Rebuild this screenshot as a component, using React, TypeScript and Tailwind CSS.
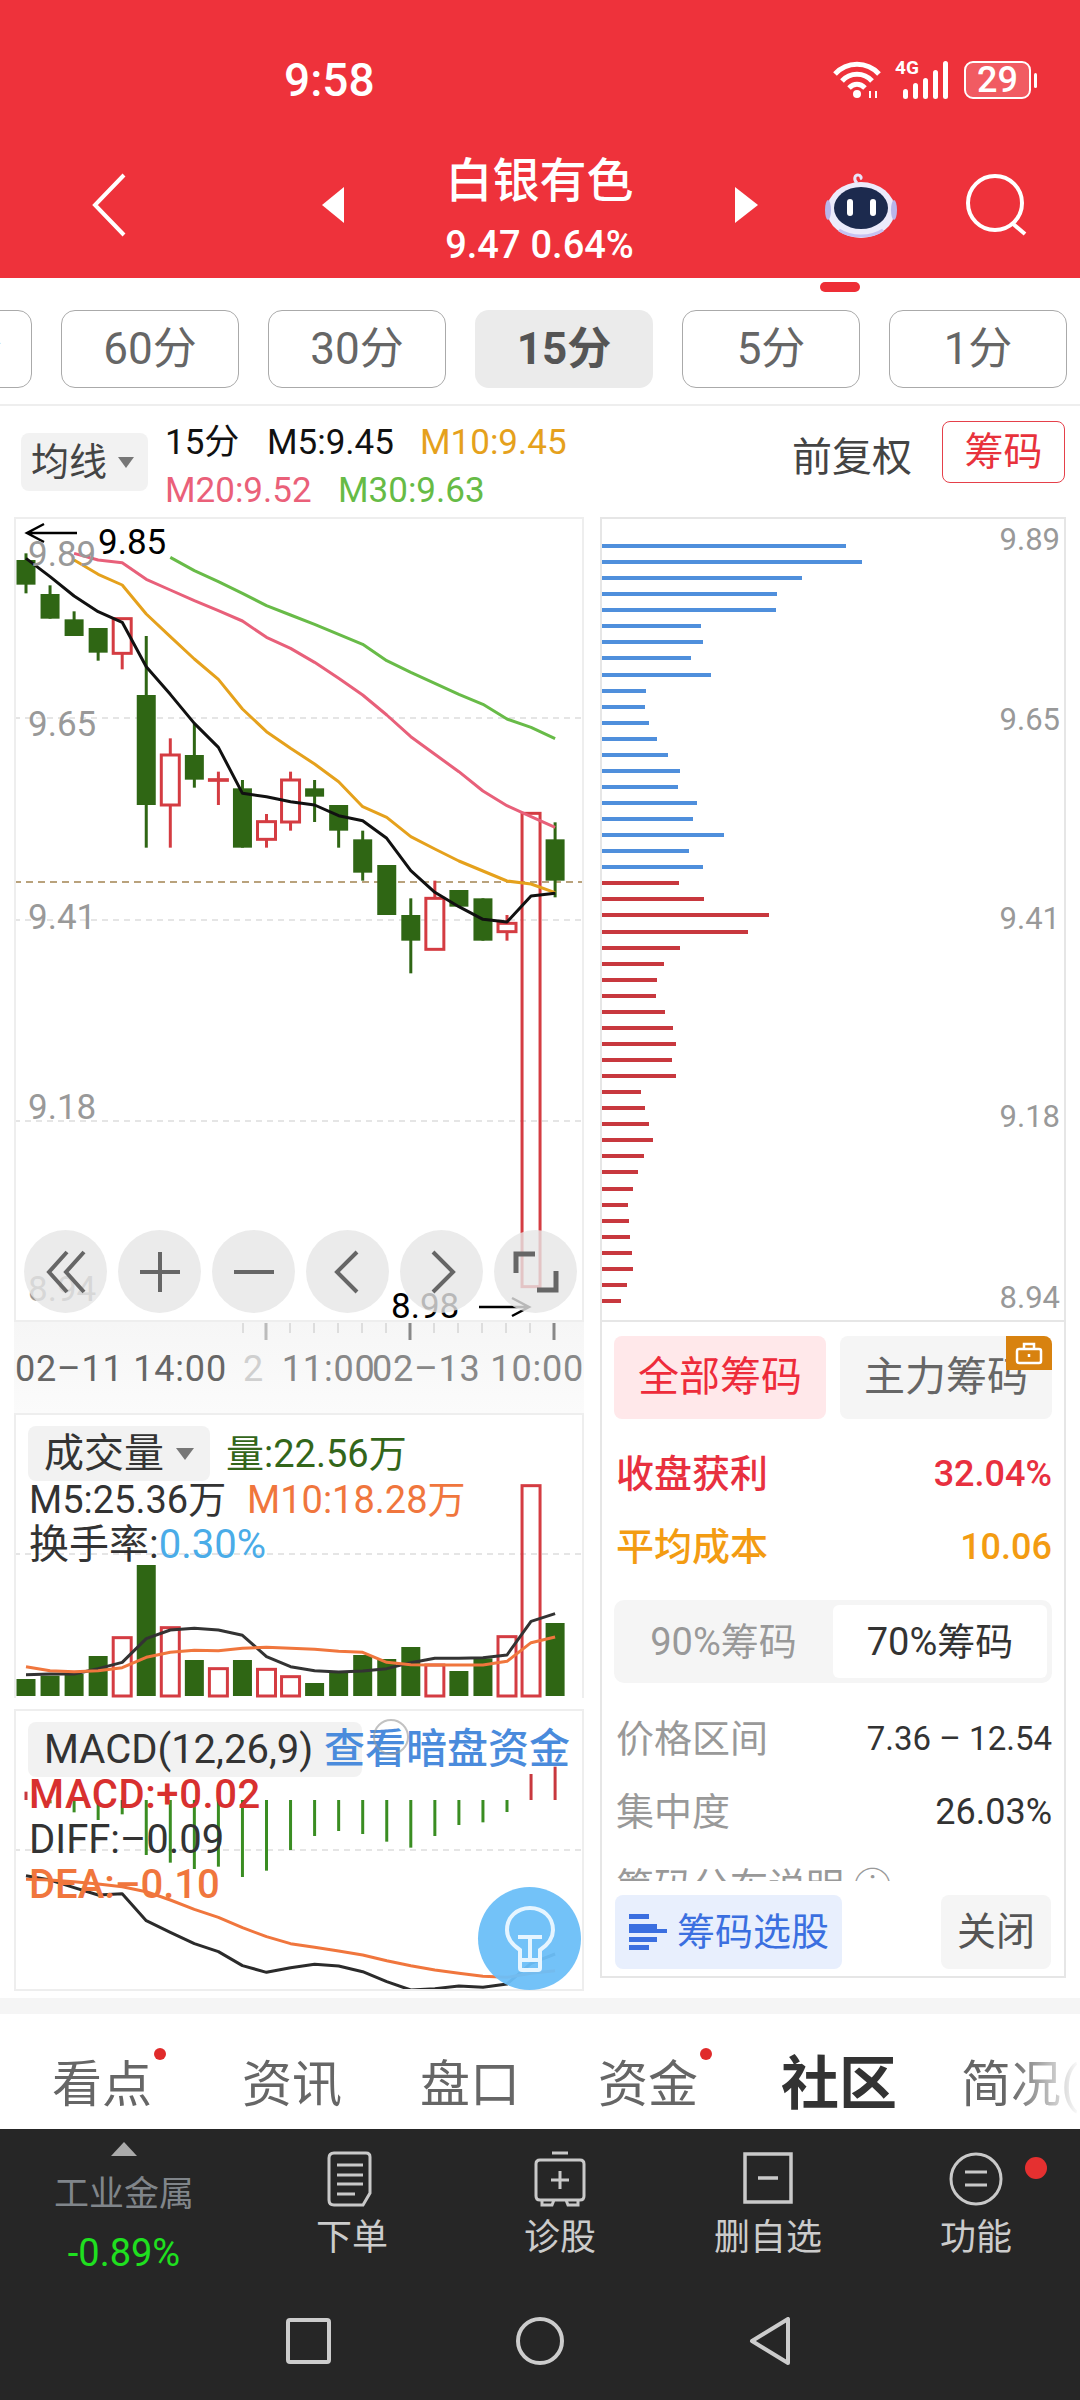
const cx = (i: number) => 26 + 24.05 * i;
const up = (z: number) => 510 + z / 3;
const vy = (z: number) => 1400 + z / 3;
const my = (z: number) => 1700 + z / 3;

// [kind, wickTop, bodyTop, bodyBottom, wickBottom] in crop units of the price pane
type Candle = ["g" | "r", number, number, number, number];
const candles: Candle[] = [
  ["g", 130, 150, 224, 250],
  ["g", 226, 252, 326, 326],
  ["g", 304, 328, 378, 378],
  ["g", 354, 354, 428, 452],
  ["r", 326, 326, 430, 478],
  ["g", 378, 555, 885, 1013],
  ["r", 685, 735, 885, 1013],
  ["g", 640, 735, 809, 833],
  ["r", 785, 809, 811, 885],
  ["g", 810, 835, 1013, 1013],
  ["r", 912, 935, 988, 1013],
  ["r", 785, 810, 936, 962],
  ["g", 810, 835, 860, 936],
  ["g", 885, 885, 962, 1013],
  ["g", 962, 988, 1088, 1112],
  ["g", 1065, 1065, 1215, 1215],
  ["g", 1165, 1215, 1292, 1390],
  ["r", 1112, 1165, 1318, 1318],
  ["g", 1140, 1140, 1190, 1190],
  ["g", 1165, 1165, 1292, 1292],
  ["r", 1215, 1240, 1265, 1292],
  ["r", 910, 910, 2330, 2330],
  ["g", 937, 988, 1112, 1162],
];

const m5 = [145, 200, 258, 305, 337, 470, 553, 640, 712, 850, 860, 875, 885, 917, 932, 985, 1082, 1147, 1190, 1228, 1236, 1158, 1150];
const m10 = [150, 193, 225, 312, 380, 447, 508, 597, 665, 715, 762, 815, 890, 922, 980, 1017, 1053, 1083, 1113, 1122, 1148];
const m20 = [130, 150, 158, 208, 240, 272, 302, 333, 382, 415, 457, 505, 555, 615, 680, 733, 785, 843, 887, 920, 952];
const m30 = [142, 182, 215, 250, 287, 315, 343, 373, 403, 452, 487, 520, 553, 583, 627, 652, 686];

const volTops = [837, 827, 822, 768, 713, 495, 683, 780, 806, 780, 808, 830, 849, 815, 765, 777, 741, 795, 813, 775, 710, 257, 669];
const volM5 = [824, 822, 822, 806, 787, 716, 690, 685, 690, 706, 770, 800, 812, 816, 813, 806, 788, 775, 775, 773, 765, 664, 641];
const volM10 = [800, 812, 815, 812, 803, 772, 757, 751, 752, 745, 742, 745, 748, 754, 757, 787, 794, 795, 795, 795, 784, 728, 711];

const hist = [275, 310, 337, 360, 343, 465, 488, 507, 500, 531, 512, 450, 408, 393, 402, 425, 443, 408, 375, 367, 336, 222, 200];
const diff = [527, 540, 563, 585, 581, 662, 697, 731, 755, 797, 817, 803, 793, 798, 815, 845, 870, 866, 858, 862, 852, 790, 762];
const dea = [538, 540, 545, 552, 560, 575, 600, 628, 652, 683, 710, 731, 742, 753, 765, 782, 797, 810, 820, 829, 832, 820, 812];

const blueBars = [765, 812, 633, 557, 554, 330, 334, 299, 360, 163, 162, 172, 197, 230, 267, 259, 318, 305, 397, 293, 334];
const redBars = [264, 337, 532, 470, 266, 219, 196, 194, 220, 246, 255, 242, 253, 149, 161, 172, 184, 158, 140, 124, 109, 113, 117, 121, 125, 107, 90];

function Line({ ys, start = 0, map, color, width = 3 }: { ys: number[]; start?: number; map: (z: number) => number; color: string; width?: number }) {
  const pts = ys.map((y, i) => `${cx(i + start)},${map(y)}`).join(" ");
  return <polyline points={pts} fill="none" stroke={color} strokeWidth={width} strokeLinejoin="round" />;
}

function PricePlot() {
  return (
    <svg className="absolute inset-0" width="566" height="801" viewBox="16 519 566 801">
      <g stroke="#dddddd" strokeWidth="1.5" strokeDasharray="6 5">
        <line x1="14" x2="584" y1="718" y2="718" />
        <line x1="14" x2="584" y1="920" y2="920" />
        <line x1="14" x2="584" y1="1121" y2="1121" />
      </g>
      <line x1="14" x2="584" y1="882" y2="882" stroke="#b9a27c" strokeWidth="2" strokeDasharray="7 5" />
      {candles.map(([kind, wt, bt, bb, wb], i) => {
        const x = cx(i);
        if (kind === "g") {
          return (
            <g key={i} fill="#2f6614">
              <rect x={x - 1.5} y={up(wt)} width="3" height={up(wb) - up(wt)} />
              <rect x={x - 9.5} y={up(bt)} width="19" height={up(bb) - up(bt)} />
            </g>
          );
        }
        return (
          <g key={i} stroke="#d43c42" strokeWidth="3" fill="none">
            <line x1={x} x2={x} y1={up(wt)} y2={up(bt)} />
            <line x1={x} x2={x} y1={up(bb)} y2={up(wb)} />
            <rect x={x - 9} y={up(bt)} width="18" height={up(bb) - up(bt)} />
          </g>
        );
      })}
      <Line ys={m30} start={6} map={up} color="#68bb48" />
      <Line ys={m20} start={2} map={up} color="#e8607a" />
      <Line ys={m10} start={2} map={up} color="#e5a11c" />
      <Line ys={m5} map={up} color="#111111" />
      <g stroke="#000000" strokeWidth="2.5" fill="none">
        <path d="M27 533H77M44 524L27 533L44 542" />
        <path d="M479 1307H529M512 1298L529 1307L512 1316" />
      </g>
    </svg>
  );
}

function VolumePlot() {
  return (
    <svg className="absolute inset-0" width="566" height="283" viewBox="16 1415 566 283">
      <line x1="14" x2="584" y1="1554" y2="1554" stroke="#dddddd" strokeWidth="1.5" strokeDasharray="6 5" />
      {volTops.map((z, i) => {
        const red = [4, 6, 8, 10, 11, 17, 20, 21].includes(i);
        const x = cx(i);
        return red ? (
          <rect key={i} x={x - 9} y={vy(z)} width="18" height={1696 - vy(z)} fill="none" stroke="#d43c42" strokeWidth="3" />
        ) : (
          <rect key={i} x={x - 9.5} y={vy(z)} width="19" height={1696 - vy(z)} fill="#2f6614" />
        );
      })}
      <Line ys={volM5} map={vy} color="#333333" />
      <Line ys={volM10} map={vy} color="#f0763d" />
    </svg>
  );
}

function MacdPlot() {
  return (
    <svg className="absolute inset-0" width="566" height="278" viewBox="16 1711 566 278">
      <line x1="14" x2="584" y1="1850" y2="1850" stroke="#dddddd" strokeWidth="1.5" strokeDasharray="6 5" />
      {hist.map((z, i) => {
        const red = z < 300;
        return (
          <line key={i} x1={cx(i)} x2={cx(i)} y1={my(z)} y2={my(300)} stroke={red ? "#c8383e" : "#3a8d22"} strokeWidth="3" />
        );
      })}
      <Line ys={diff} map={my} color="#2b2b2b" />
      <Line ys={dea} map={my} color="#f0763d" />
    </svg>
  );
}

function Robot() {
  return (
    <svg width="72" height="65" viewBox="0 0 72 65">
      <path d="M32 10C28 6 30 2 33 2C36 2 37 5 35 6" fill="none" stroke="#e8e4f8" strokeWidth="3" />
      <ellipse cx="36" cy="37" rx="34" ry="28" fill="#ecebfb" />
      <ellipse cx="3" cy="37" rx="3" ry="10" fill="#b9b6ea" />
      <ellipse cx="69" cy="37" rx="3" ry="10" fill="#b9b6ea" />
      <ellipse cx="36" cy="35" rx="27" ry="21" fill="#1c2a4e" />
      <rect x="22" y="26" width="6" height="17" rx="3" fill="#ffffff" />
      <rect x="45" y="26" width="6" height="17" rx="3" fill="#ffffff" />
      <path d="M14 57C26 65 46 65 58 57" fill="none" stroke="#c6c2f2" strokeWidth="3" />
    </svg>
  );
}

function StatusIcons() {
  return (
    <div className="flex items-center">
      <svg width="50" height="38" viewBox="0 0 50 38" fill="none" stroke="#ffffff" strokeWidth="5">
        <path d="M2 13C14 0 34 0 46 13" />
        <path d="M9 20C17 11 31 11 39 20" />
        <path d="M16 27C21 22 27 22 32 27" />
        <circle cx="24" cy="33" r="4" fill="#ffffff" stroke="none" />
        <path d="M37 30V37M43 30V37" strokeWidth="2" />
      </svg>
      <div className="relative ml-[12px] h-[38px] w-[53px]">
        <span className="absolute left-0 top-[-5px] text-[19px] font-bold leading-[24px] text-white">4G</span>
        <div className="absolute inset-0 flex items-end justify-end gap-[5px]">
          <div className="h-[10px] w-[5px] rounded-full bg-white" />
          <div className="h-[16px] w-[5px] rounded-full bg-white" />
          <div className="h-[21px] w-[5px] rounded-full bg-white" />
          <div className="h-[29px] w-[5px] rounded-full bg-white" />
          <div className="h-[38px] w-[5px] rounded-full bg-white" />
        </div>
      </div>
      <div className="ml-[16px] flex h-[38px] w-[67px] items-center justify-center rounded-[9px] border-2 border-white bg-white/20 text-[36px] font-medium leading-none text-white">
        29
      </div>
      <div className="ml-[3px] h-[15px] w-[3px] rounded-full bg-white" />
    </div>
  );
}

function Header() {
  return (
    <div className="h-[278px] shrink-0 bg-[#ee323b] text-white">
      <div className="flex h-[160px] items-center pl-[284px] pr-[43px]">
        <span className="text-[46px] font-medium leading-none">9:58</span>
        <div className="ml-auto">
          <StatusIcons />
        </div>
      </div>
      <div className="flex h-[90px] items-center pl-[92px]">
        <svg width="34" height="64" viewBox="0 0 34 64" fill="none" stroke="#ffffff" strokeWidth="4">
          <path d="M32 2L3 32L32 62" />
        </svg>
        <div className="ml-[196px] h-0 w-0 border-y-[18px] border-r-[22px] border-y-transparent border-r-white" />
        <div className="flex h-[105px] w-[391px] flex-col items-center self-start">
          <div className="flex h-[40px] items-center text-[47px] font-medium leading-none">白银有色</div>
          <div className="mt-[25px] flex h-[40px] items-center gap-[10px] text-[38px] font-medium leading-none">
            <span>9.47</span>
            <span>0.64%</span>
          </div>
        </div>
        <div className="h-0 w-0 border-y-[18px] border-l-[23px] border-y-transparent border-l-white" />
        <div className="ml-[67px]">
          <Robot />
        </div>
        <svg className="ml-[69px]" width="62" height="62" viewBox="0 0 62 62" fill="none" stroke="#ffffff" strokeWidth="4">
          <circle cx="29" cy="29" r="27" />
          <path d="M46 49L59 60" />
        </svg>
      </div>
    </div>
  );
}

function PeriodTabs() {
  const tabs = ["120分", "60分", "30分", "15分", "5分", "1分"];
  return (
    <div className="h-[128px] shrink-0 overflow-hidden border-b-2 border-[#eeeeee]">
      <div className="ml-[820px] mt-[4px] h-[10px] w-[40px] rounded-full bg-[#ee2e36]" />
      <div className="ml-[-146px] mt-[18px] flex gap-[29px]">
        {tabs.map((t) => (
          <div
            key={t}
            className={
              t === "15分"
                ? "flex h-[78px] w-[178px] shrink-0 items-center justify-center rounded-[14px] bg-[#ebebeb] text-[44px] font-bold text-[#555555]"
                : "flex h-[78px] w-[178px] shrink-0 items-center justify-center rounded-[14px] border border-[#aaaaaa] text-[44px] text-[#666666]"
            }
          >
            {t}
          </div>
        ))}
      </div>
    </div>
  );
}

function InfoRow() {
  return (
    <div className="flex h-[111px] shrink-0 items-start">
      <div className="ml-[21px] mt-[27px] flex h-[58px] w-[127px] items-center rounded-[8px] bg-[#f2f2f2] pl-[10px]">
        <span className="text-[38px] leading-none text-[#444444]">均线</span>
        <div className="ml-[11px] h-0 w-0 border-x-[8px] border-t-[11px] border-x-transparent border-t-[#777777]" />
      </div>
      <div className="ml-[17px] mt-[13px] text-[35px]">
        <div className="flex h-[48px] items-center">
          <span className="w-[102px] text-[#111111]">15分</span>
          <span className="w-[153px] text-[#111111]">M5:9.45</span>
          <span className="text-[#e5a11c]">M10:9.45</span>
        </div>
        <div className="flex h-[48px] items-center">
          <span className="w-[173px] text-[#ea6079]">M20:9.52</span>
          <span className="text-[#66bb46]">M30:9.63</span>
        </div>
      </div>
      <span className="ml-auto mt-[32px] text-[40px] leading-[40px] text-[#444444]">前复权</span>
      <div className="ml-[30px] mr-[15px] mt-[15px] flex h-[62px] w-[123px] items-center justify-center rounded-[8px] border border-[#e5404a] text-[39px] leading-none text-[#e8323c]">
        筹码
      </div>
    </div>
  );
}

function ToolButton({ children }: { children: React.ReactNode }) {
  return (
    <div className="flex h-[83px] w-[83px] items-center justify-center rounded-full bg-[#e6e6e6]/80">
      <svg width="46" height="46" viewBox="0 0 46 46" fill="none" stroke="#666666" strokeWidth="4">
        {children}
      </svg>
    </div>
  );
}

function PriceChart() {
  return (
    <div className="relative h-[805px] border-2 border-[#eeeeee]">
      <PricePlot />
      <span className="absolute left-[12px] top-[15px] text-[35px] leading-[42px] text-[#999999]">9.89</span>
      <span className="absolute left-[82px] top-[3px] text-[35px] leading-[42px] text-black">9.85</span>
      <span className="absolute left-[12px] top-[185px] text-[35px] leading-[42px] text-[#999999]">9.65</span>
      <span className="absolute left-[12px] top-[378px] text-[35px] leading-[42px] text-[#999999]">9.41</span>
      <span className="absolute left-[12px] top-[568px] text-[35px] leading-[42px] text-[#999999]">9.18</span>
      <span className="absolute left-[12px] top-[750px] text-[35px] leading-[42px] text-[#999999]">8.94</span>
      <span className="absolute left-[375px] top-[767px] text-[35px] leading-[42px] text-black">8.98</span>
      <div className="absolute left-[8px] top-[711px] flex gap-[11px]">
        <ToolButton>
          <path d="M24 3L6 23L24 43M41 3L23 23L41 43" />
        </ToolButton>
        <ToolButton>
          <path d="M3 23H43M23 3V43" />
        </ToolButton>
        <ToolButton>
          <path d="M3 23H43" />
        </ToolButton>
        <ToolButton>
          <path d="M32 3L12 23L32 43" />
        </ToolButton>
        <ToolButton>
          <path d="M14 3L34 23L14 43" />
        </ToolButton>
        <ToolButton>
          <path d="M22 5H3V24M24 41H43V22" strokeWidth="5" />
        </ToolButton>
      </div>
    </div>
  );
}

function TimeAxis() {
  const small = [243, 290, 314, 338, 362, 386, 434, 458, 482, 506, 530];
  return (
    <div className="relative h-[91px] bg-gradient-to-b from-[#f6f6f6] to-[#fbfbfb]">
      <svg className="absolute left-0 top-0" width="570" height="20" viewBox="14 1322 570 20">
        {small.map((x) => (
          <line key={x} x1={x} x2={x} y1="1323" y2="1333" stroke="#c4c4c4" strokeWidth="1" />
        ))}
        <line x1="266" x2="266" y1="1323" y2="1340" stroke="#bbbbbb" strokeWidth="3" />
        <line x1="410" x2="410" y1="1323" y2="1340" stroke="#888888" strokeWidth="3" />
        <line x1="554" x2="554" y1="1323" y2="1340" stroke="#888888" strokeWidth="3" />
      </svg>
      <div className="flex h-[91px] items-center whitespace-nowrap pl-[1px] pt-[2px] text-[36px] tracking-[0.8px] text-[#888888]">
        <span className="w-[236px] text-[#666666]">02–11 14:00</span>
        <span className="w-[129px]">
          <span className="mr-[8px] text-[#d0d0d0]">2</span> 11:00
        </span>
        <span>02–13 10:00</span>
      </div>
    </div>
  );
}

function VolumeChart() {
  return (
    <div className="relative h-[285px] border-x-2 border-t-2 border-[#eeeeee]">
      <VolumePlot />
      <div className="relative pl-[12px] pt-[11px]">
        <div className="flex items-center">
          <div className="flex h-[55px] w-[182px] items-center rounded-[8px] bg-[#f2f2f2] pl-[16px]">
            <span className="text-[40px] leading-none text-[#333333]">成交量</span>
            <div className="ml-[12px] h-0 w-0 border-x-[9px] border-t-[12px] border-x-transparent border-t-[#777777]" />
          </div>
          <span className="ml-[16px] text-[38px] leading-none text-[#33661a]">量:22.56万</span>
        </div>
        <div className="flex h-[38px] items-center text-[38px] leading-none">
          <span className="ml-[1px] w-[218px] text-[#333333]">M5:25.36万</span>
          <span className="text-[#f0763d]">M10:18.28万</span>
        </div>
        <div className="ml-[1px] flex h-[52px] items-center text-[40px] leading-none text-[#333333]">
          换手率:<span className="text-[#4aace8]">0.30%</span>
        </div>
      </div>
    </div>
  );
}

function MacdChart() {
  return (
    <div className="relative mt-[11px] h-[282px] border-2 border-[#eeeeee]">
      <MacdPlot />
      <div className="relative pl-[12px] pt-[11px]">
        <div className="flex items-center">
          <div className="flex h-[55px] w-[334px] items-center rounded-[8px] bg-[#f2f2f2] pl-[16px] text-[40px] leading-none text-[#333333]">
            MACD(12,26,9)
          </div>
          <span className="ml-[-38px] text-[41px] font-medium leading-none text-[#4a8bdc]">查看暗盘资金</span>
          <div className="absolute left-[357px] top-[8px] h-[36px] w-[36px] rounded-full border-2 border-[#999999]/60" />
        </div>
        <div className="ml-[1px] flex flex-col gap-[9px] text-[40px] leading-none">
          <div className="flex h-[36px] items-center font-medium tracking-[0.6px] text-[#d8302f]">MACD:+0.02</div>
          <div className="flex h-[36px] items-center text-[#333333]">DIFF:–0.09</div>
          <div className="flex h-[36px] items-center font-medium text-[#f0763d]">DEA:–0.10</div>
        </div>
      </div>
      <div className="absolute left-[462px] top-[176px] flex h-[103px] w-[103px] items-center justify-center rounded-full bg-[#6cbff8]/95">
        <svg className="ml-[1px]" width="50" height="66" viewBox="0 0 50 66" fill="none" stroke="#e6f5ff" strokeWidth="4">
          <path d="M15 44C6 38 2 31 2 24C2 11 12 2 25 2C38 2 48 11 48 24C48 31 44 38 35 44V62Q35 64 33 64H17Q15 64 15 62Z" />
          <path d="M13 31H37M25 31V54M15 54H35" />
        </svg>
      </div>
    </div>
  );
}

function DepthPanel() {
  return (
    <div className="relative h-[805px] border-2 border-[#e6e6e6] pt-[19px]">
      {[...blueBars.map((z) => ({ z, c: "b" })), ...redBars.map((z) => ({ z, c: "r" }))].map((b, i) => (
        <div key={i} className="flex h-[16.07px] items-center">
          <div className={b.c === "b" ? "h-[4px] bg-[#4f8fdc]" : "h-[4px] bg-[#c8383e]"} style={{ width: (b.z - 32) / 3 }} />
        </div>
      ))}
      <span className="absolute right-[4px] top-[2px] text-[31px] leading-[38px] text-[#999999]">9.89</span>
      <span className="absolute right-[4px] top-[182px] text-[31px] leading-[38px] text-[#999999]">9.65</span>
      <span className="absolute right-[4px] top-[381px] text-[31px] leading-[38px] text-[#999999]">9.41</span>
      <span className="absolute right-[4px] top-[579px] text-[31px] leading-[38px] text-[#999999]">9.18</span>
      <span className="absolute right-[4px] top-[760px] text-[31px] leading-[38px] text-[#999999]">8.94</span>
    </div>
  );
}

function StatRow({ label, value, labelColor, valueClass, medium }: { label: string; value: string; labelColor: string; valueClass: string; medium?: boolean }) {
  return (
    <div className={`flex h-[73px] items-center justify-between text-[38px] leading-none ${labelColor}`}>
      <span className={medium ? "font-medium" : ""}>{label}</span>
      <span className={`${medium ? "font-medium" : ""} ${valueClass}`}>{value}</span>
    </div>
  );
}

function ChipPanel() {
  return (
    <div className="flex h-[656px] flex-col border-x-2 border-b-2 border-[#e6e6e6] pl-[12px] pr-[12px] pt-[14px]">
      <div className="flex gap-[14px]">
        <div className="flex h-[83px] w-[212px] items-center justify-center rounded-[8px] bg-[#ffe8ea] text-[41px] leading-none text-[#ee2b3a]">全部筹码</div>
        <div className="relative flex h-[83px] w-[212px] items-center justify-center rounded-[8px] bg-[#f5f5f5] text-[41px] leading-none text-[#666666]">
          主力筹码
          <div className="absolute right-0 top-0 flex h-[34px] w-[46px] items-center justify-center rounded-tr-[8px] bg-[#d8820f]">
            <svg width="28" height="24" viewBox="0 0 28 24" fill="none" stroke="#ffffff" strokeWidth="2.5">
              <rect x="2" y="8" width="24" height="14" rx="2" />
              <path d="M9 8V3H19V8M14 13V16" />
            </svg>
          </div>
        </div>
      </div>
      <div className="ml-[2px] mt-[18px]">
        <StatRow label="收盘获利" value="32.04%" labelColor="text-[#e8303f]" valueClass="text-[36px] text-[#e8303f]" medium />
        <StatRow label="平均成本" value="10.06" labelColor="text-[#f39c12]" valueClass="text-[36px] text-[#f39c12]" medium />
      </div>
      <div className="mt-[17px] flex h-[83px] items-center rounded-[10px] bg-[#f5f5f5] pr-[5px]">
        <span className="w-[219px] text-center text-[38px] leading-none text-[#999999]">90%筹码</span>
        <div className="flex h-[73px] w-[214px] items-center justify-center rounded-[6px] bg-white text-[38px] leading-none text-[#333333]">70%筹码</div>
      </div>
      <div className="ml-[2px] mt-[19px]">
        <StatRow label="价格区间" value="7.36 – 12.54" labelColor="text-[#999999]" valueClass="text-[33px] text-[#333333]" />
        <StatRow label="集中度" value="26.03%" labelColor="text-[#999999]" valueClass="text-[36px] text-[#333333]" />
      </div>
      <div className="ml-[2px] mt-[18px] h-[15px] overflow-hidden text-[38px] leading-[42px] text-[#999999]">
        筹码分布说明 ⓘ
      </div>
      <div className="mt-[14px] flex items-center justify-between px-[1px]">
        <div className="flex h-[74px] w-[227px] items-center rounded-[8px] bg-[#e8effd] pl-[14px]">
          <svg width="38" height="36" viewBox="0 0 38 36" fill="#3b6fe0">
            <rect x="0" y="0" width="20" height="5" />
            <rect x="0" y="10" width="28" height="5" />
            <rect x="0" y="15" width="38" height="4" />
            <rect x="0" y="23" width="28" height="5" />
            <rect x="0" y="31" width="20" height="5" />
          </svg>
          <span className="ml-[10px] text-[38px] leading-none text-[#3b6fe0]">筹码选股</span>
        </div>
        <div className="flex h-[74px] w-[110px] items-center justify-center rounded-[8px] bg-[#f5f5f5] text-[39px] leading-none text-[#555555]">关闭</div>
      </div>
    </div>
  );
}

function SectionTabs() {
  return (
    <div className="relative flex h-[115px] shrink-0 items-start overflow-hidden bg-white pl-[52px] pt-[46px] text-[50px] leading-[50px] text-[#666666]">
      <span className="w-[190px]">看点</span>
      <span className="w-[178px]">资讯</span>
      <span className="w-[178px]">盘口</span>
      <span className="w-[183px]">资金</span>
      <span className="mt-[-1px] w-[180px] text-[58px] font-bold text-[#333333]">社区</span>
      <span className="whitespace-nowrap">简况(</span>
      <div className="absolute right-0 top-0 h-full w-[70px] bg-gradient-to-r from-white/0 to-white" />
      <div className="absolute left-[154px] top-[34px] h-[12px] w-[12px] rounded-full bg-[#e02b2b]" />
      <div className="absolute left-[700px] top-[34px] h-[12px] w-[12px] rounded-full bg-[#e02b2b]" />
    </div>
  );
}

function BottomAction({ label, children, dot }: { label: string; children: React.ReactNode; dot?: boolean }) {
  return (
    <div className="relative flex w-[208px] flex-col items-center pt-[22px]">
      <svg width="60" height="56" viewBox="0 0 60 56" fill="none" stroke="#c9c9c9" strokeWidth="3">
        {children}
      </svg>
      <span className="mt-[11px] text-[36px] leading-[40px] text-[#cccccc]">{label}</span>
      {dot && <div className="absolute left-[153px] top-[28px] h-[22px] w-[22px] rounded-full bg-[#e53030]" />}
    </div>
  );
}

function BottomBar() {
  return (
    <div className="flex-1 bg-[#262626]">
      <div className="flex h-[188px]">
        <div className="flex w-[248px] flex-col items-center pt-[13px]">
          <div className="h-0 w-0 border-x-[13px] border-b-[14px] border-x-transparent border-b-[#aaaaaa]" />
          <span className="mt-[19px] text-[35px] leading-[40px] text-[#80858a]">工业金属</span>
          <span className="mt-[18px] text-[38px] leading-[40px] text-[#1fe01f]">-0.89%</span>
        </div>
        <BottomAction label="下单">
          <path d="M12 2H44Q48 2 48 6V42L41 54H12Q7 54 7 49V7Q7 2 12 2ZM15 14H41M15 24H41M15 33H41M15 43H33" />
        </BottomAction>
        <BottomAction label="诊股">
          <path d="M22 2H38M10 9H50Q54 9 54 13V45Q54 49 50 49H10Q6 49 6 45V13Q6 9 10 9ZM30 20V38M21 29H39M12 49V54H22L24 49M48 49V54H38L36 49" />
        </BottomAction>
        <BottomAction label="删自选">
          <path d="M7 3H53V51H7ZM20 27H40" strokeWidth="3.5" />
        </BottomAction>
        <BottomAction label="功能" dot>
          <ellipse cx="30" cy="28" rx="25" ry="25" />
          <path d="M19 21H41M19 34H41" />
        </BottomAction>
      </div>
      <div className="flex h-[48px] items-center">
        <svg className="ml-[286px]" width="45" height="46" viewBox="0 0 45 46" fill="none" stroke="#cccccc" strokeWidth="4">
          <rect x="2" y="2" width="41" height="42" rx="2" />
        </svg>
        <svg className="ml-[185px]" width="48" height="48" viewBox="0 0 48 48" fill="none" stroke="#cccccc" strokeWidth="4">
          <circle cx="24" cy="24" r="22" />
        </svg>
        <svg className="ml-[185px]" width="42" height="48" viewBox="0 0 42 48" fill="none" stroke="#cccccc" strokeWidth="4" strokeLinejoin="round">
          <path d="M39 2V46L3 24Z" />
        </svg>
      </div>
    </div>
  );
}

export default function App() {
  return (
    <div className="flex h-[2400px] w-[1080px] flex-col overflow-hidden bg-white font-[Roboto,'Noto_Sans_CJK_SC',sans-serif]">
      <Header />
      <PeriodTabs />
      <InfoRow />
      <div className="flex h-[1481px] shrink-0 gap-[16px] pl-[14px] pr-[14px]">
        <div className="w-[570px] shrink-0">
          <PriceChart />
          <TimeAxis />
          <VolumeChart />
          <MacdChart />
        </div>
        <div className="w-[466px] shrink-0">
          <DepthPanel />
          <ChipPanel />
        </div>
      </div>
      <div className="h-[16px] shrink-0 bg-[#f5f5f5]" />
      <SectionTabs />
      <BottomBar />
    </div>
  );
}
